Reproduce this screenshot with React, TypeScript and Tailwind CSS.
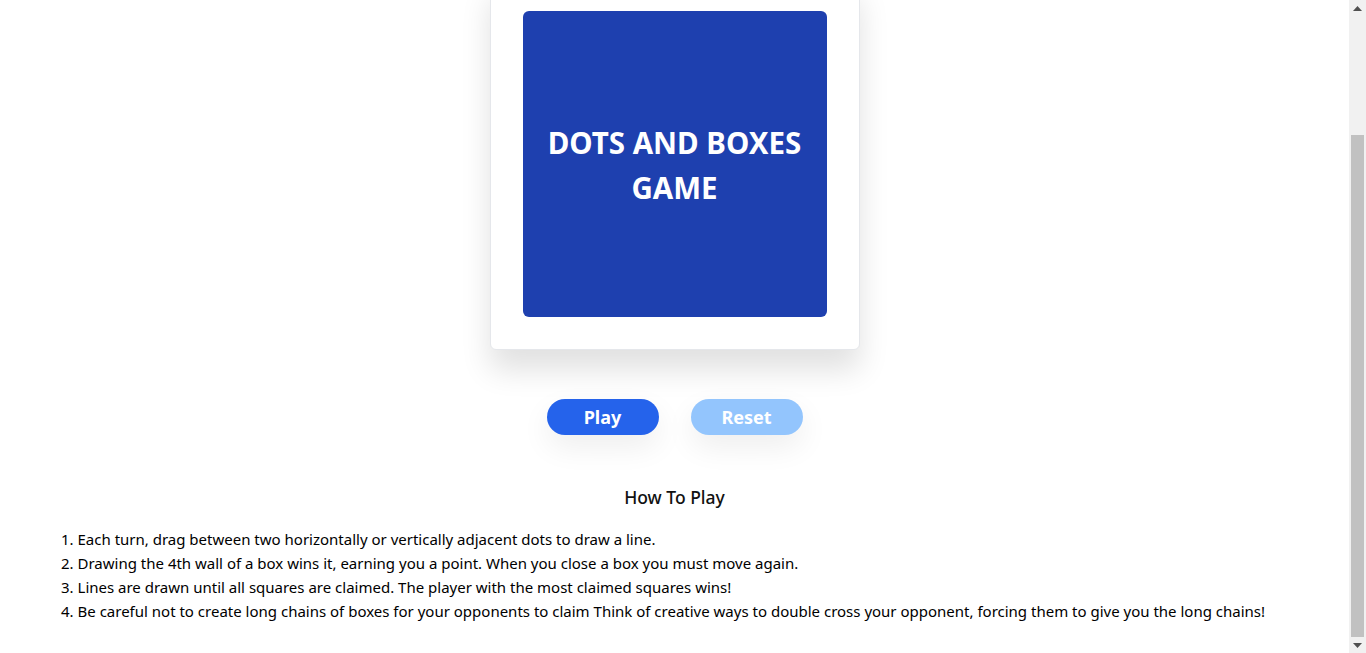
import React from 'react';

const rules = [
  'Each turn, drag between two horizontally or vertically adjacent dots to draw a line.',
  'Drawing the 4th wall of a box wins it, earning you a point. When you close a box you must move again.',
  'Lines are drawn until all squares are claimed. The player with the most claimed squares wins!',
  'Be careful not to create long chains of boxes for your opponents to claim Think of creative ways to double cross your opponent, forcing them to give you the long chains!',
];

const Scrollbar: React.FC = () => (
  <div className="w-[17px] h-[653px] bg-[#f1f1f1] flex flex-col items-center shrink-0">
    <div className="h-[17px] w-full flex items-center justify-center">
      <svg width="9" height="5" viewBox="0 0 9 5">
        <path d="M4.5 0 L9 5 L0 5 Z" fill="#505050" />
      </svg>
    </div>
    <div className="h-[118px]" />
    <div className="w-[13px] h-[502px] bg-[#c1c1c1]" />
    <div className="flex-1 w-full flex items-center justify-center">
      <svg width="9" height="5" viewBox="0 0 9 5">
        <path d="M0 0 L9 0 L4.5 5 Z" fill="#505050" />
      </svg>
    </div>
  </div>
);

export default function App() {
  return (
    <div
      className="flex h-[653px] overflow-hidden bg-white text-[#111]"
      style={{ fontFamily: '"Noto Sans", "Open Sans", sans-serif' }}
    >
      <main className="flex-1 flex flex-col items-center">
        <div className="-mt-[22px] bg-white rounded-md border border-gray-200 p-8 shadow-[0_20px_30px_rgba(0,0,0,0.12)]">
          <div className="w-[304px] h-[306px] bg-[#1e40af] rounded-md flex items-center justify-center pt-[2px]">
            <h1 className="text-white font-bold text-[29.5px] leading-[45px] text-center px-2">
              DOTS AND BOXES
              <br />
              GAME
            </h1>
          </div>
        </div>

        <div className="mt-[49px] flex gap-8">
          <button className="w-[112px] h-9 rounded-full bg-[#2563eb] text-white font-bold text-lg shadow-[0_12px_30px_rgba(0,0,0,0.07)]">
            Play
          </button>
          <button className="w-[112px] h-9 rounded-full bg-[#93c5fd] text-white font-bold text-lg shadow-[0_12px_30px_rgba(0,0,0,0.07)]">
            Reset
          </button>
        </div>

        <h2 className="mt-[49px] text-[17.5px] font-medium">How To Play</h2>

        <ol className="mt-[17px] self-stretch pl-[61px] text-[15px] leading-6 text-black">
          {rules.map((rule, i) => (
            <li key={i}>
              {i + 1}. {rule}
            </li>
          ))}
        </ol>
      </main>
      <Scrollbar />
    </div>
  );
}
